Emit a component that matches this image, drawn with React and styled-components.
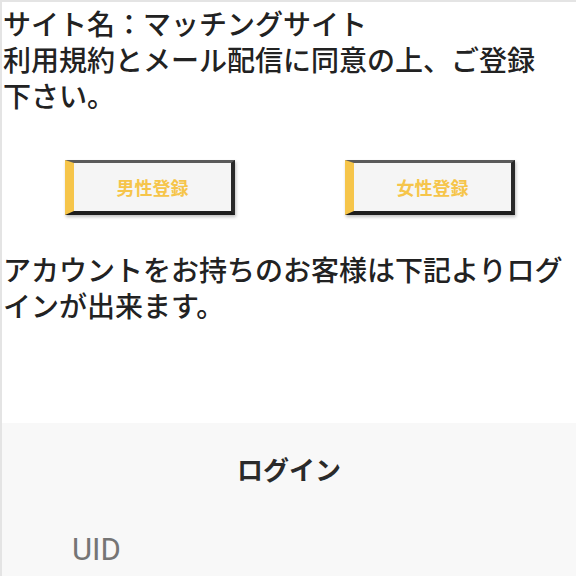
import React from "react";
import styled, { createGlobalStyle } from "styled-components";

const Global = createGlobalStyle`
  html, body { margin: 0; padding: 0; background: #fff; }
  body { font-family: "Noto Sans CJK JP", "Noto Sans", sans-serif; color: #222; }
`;

const Page = styled.div`
  border-top: 2px solid #e4e4e4;
  border-left: 2px solid #e4e4e4;
  min-height: 574px;
  display: flex;
  flex-direction: column;
`;

const Intro = styled.p`
  margin: 0;
  padding: 3px 0 0 1px;
  font-size: 28px;
  font-weight: 500;
  line-height: 36px;
`;

const ButtonRow = styled.div`
  display: grid;
  grid-template-columns: 280px 280px;
  justify-content: start;
  padding: 47px 0 0 8px;
`;

const Cell = styled.div`
  display: flex;
  justify-content: center;
`;

const RegButton = styled.button`
  box-sizing: border-box;
  width: 170px;
  height: 55px;
  background: #f5f5f5;
  border-style: solid;
  border-width: 3px 4px 4px 9px;
  border-color: #5a5a5a #2a2a2a #1e1e1e #f6c54a;
  box-shadow: 1px 2px 3px rgba(0, 0, 0, 0.25);
  color: #f6c54a;
  font-family: "Noto Sans CJK JP", sans-serif;
  font-weight: 700;
  font-size: 18px;
  padding: 0;
  cursor: pointer;
`;

const Note = styled.p`
  margin: 0;
  padding: 36px 0 0 1px;
  font-size: 28px;
  font-weight: 500;
  line-height: 36px;
`;

const LoginSection = styled.section`
  margin-top: 100px;
  flex: 1;
  background: #f8f8f8;
  padding: 26px 0 0;
`;

const LoginTitle = styled.h2`
  margin: 0;
  text-align: center;
  font-size: 26px;
  font-weight: 700;
  color: #2a2a2a;
  line-height: 40px;
`;

const FieldLabel = styled.label`
  display: block;
  margin: 42px 0 0 70px;
  font-family: Roboto, "Noto Sans", sans-serif;
  font-size: 31px;
  color: #757575;
`;

export default function App() {
  return (
    <>
      <Global />
      <Page>
        <Intro>
          サイト名：マッチングサイト
          <br />
          利用規約とメール配信に同意の上、ご登録
          <br />
          下さい。
        </Intro>
        <ButtonRow>
          <Cell>
            <RegButton>男性登録</RegButton>
          </Cell>
          <Cell>
            <RegButton>女性登録</RegButton>
          </Cell>
        </ButtonRow>
        <Note>
          アカウントをお持ちのお客様は下記よりログ
          <br />
          インが出来ます。
        </Note>
        <LoginSection>
          <LoginTitle>ログイン</LoginTitle>
          <FieldLabel>UID</FieldLabel>
        </LoginSection>
      </Page>
    </>
  );
}
